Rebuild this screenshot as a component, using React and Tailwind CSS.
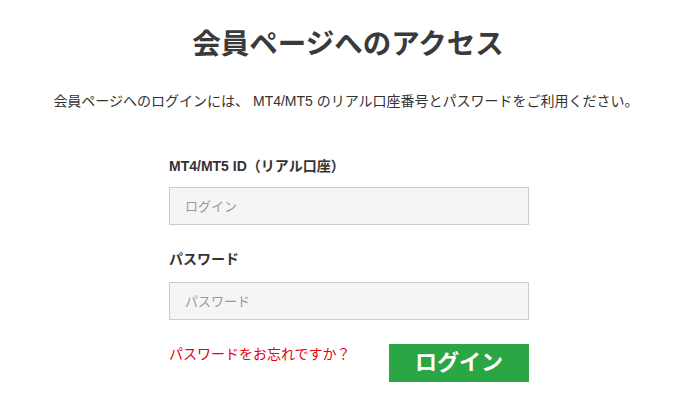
import React from "react";

const font = { fontFamily: '"Liberation Sans", "Noto Sans CJK JP", sans-serif' };

function App() {
  return (
    <div className="min-h-screen w-[690px] h-[405px] bg-white text-[#333]" style={font}>
      {/* Title */}
      <h1 className="pt-[24px] text-center text-[28.5px] leading-[40px] font-bold text-[#3a3a3a] pl-[6px]">
        会員ページへのアクセス
      </h1>

      {/* Description */}
      <p className="mt-[27px] text-center text-[14px] leading-[20px] text-[#333] pl-[2px]">
        会員ページへのログインには、 MT4/MT5 のリアル口座番号とパスワードをご利用ください。
      </p>

      {/* Form */}
      <div className="flex justify-center pl-2">
        <form className="w-[360px]" onSubmit={(e) => e.preventDefault()}>
          <label className="block mt-[45px] text-[14px] leading-[20px] font-bold text-[#333]">
            MT4/MT5 ID（リアル口座）
          </label>
          <input
            type="text"
            placeholder="ログイン"
            className="mt-[11px] block w-full h-[38px] px-[15px] bg-[#f5f5f5] border border-[#ccc] text-[13px] placeholder:text-[#999] outline-none"
          />

          <label className="block mt-[24px] text-[14px] leading-[20px] font-bold text-[#333]">
            パスワード
          </label>
          <input
            type="password"
            placeholder="パスワード"
            className="mt-[13px] block w-full h-[38px] px-[15px] bg-[#f5f5f5] border border-[#ccc] text-[13px] placeholder:text-[#999] outline-none"
          />

          <div className="mt-[24px] flex items-start justify-between">
            <a href="#" className="text-[14px] leading-[20px] text-[#e60012] whitespace-nowrap">
              パスワードをお忘れですか？
            </a>
            <button
              type="submit"
              className="w-[140px] h-[38px] bg-[#2aa645] text-white text-[22px] font-bold leading-none"
            >
              ログイン
            </button>
          </div>
        </form>
      </div>
    </div>
  );
}

export default App;
